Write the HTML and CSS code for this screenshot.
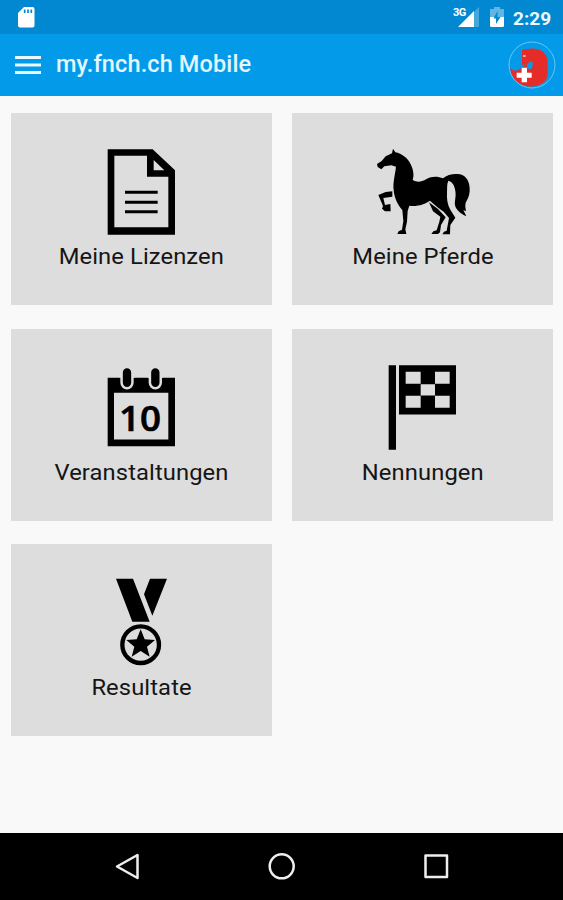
FILE: index.html
```html
<!DOCTYPE html>
<html lang="de">
<head>
<meta charset="utf-8">
<title>my.fnch.ch Mobile</title>
<link rel="stylesheet" href="styles.css">
</head>
<body>
<div class="status">
  <svg class="sd" width="17" height="21" viewBox="0 0 17 21"><path fill="#fff" d="M6 0H14.5Q16.500 0 16.500 2V18.500Q16.500 20.500 14.500 20.500H2Q0 20.500 0 18.500V6Z"/><path stroke="#0288d1" stroke-width="1.700" d="M6.700 2.500V6M10 2.500V6M13.300 2.500V6"/></svg>
  <svg class="signals" width="52" height="24" viewBox="0 0 52 24"><path fill="#45a8dc" d="M19 7L25 1V21H19Z"/><path fill="#fff" d="M4 21L20 5V21Z"/><path fill="#62b5e2" d="M36 3H40V1H46V3H50V11H36Z"/><path fill="#fff" d="M36 11H50V19.500Q50 21 48.500 21H37.500Q36 21 36 19.500Z"/><path fill="#0288d1" d="M43.500 5L39.500 12.500H42V18L46.500 11H43.500Z"/></svg>
  <span class="net">3G</span>
  <span class="clock">2:29</span>
</div>
<header class="bar">
  <svg width="26" height="20" viewBox="0 0 26 20"><path stroke="#e8f8ff" stroke-width="2.800" d="M0 2.500H26M0 10H26M0 17.500H26"/></svg>
  <h1>my.fnch.ch Mobile</h1>
  <svg class="avatar" width="48" height="48" viewBox="0 0 144 144"><path fill="#e52c29" d="M42 44V28Q48 23 66 23C93 20 117 34 119 60V98Q118 114 107 124Q90 137 64 137C30 133 8 110 6 82Q17 92 30 88L45 77C53 70 51 64 60 60Q68 56 73 64C79 80 76 92 66 104L88 106Q74 96 76 72Q73 61 67 63L51 70L42 72Z"/><path fill="#e52c29" d="M68 73H92V125H68Z"/><path fill="#069bea" d="M59 82Q53 75 60 67Q68 57 73 63Q77 75 68 86Z"/><circle cx="72" cy="72" r="69" fill="none" stroke="#69c7f3" stroke-width="3"/><path fill="#fff" d="M41 80H57V95H71V110H57V124H41V110H26V95H41Z"/><path fill="#f3a3a8" d="M45 42H53V48H45Z"/></svg>
</header>
<main class="grid">
  <section class="tile">
    <svg viewBox="0 0 783 384"><g transform="translate(87 81)"><path fill-rule="evenodd" d="M203 28H338L405 91V284H203ZM223 47V262H385V110H321V47ZM341 60V91H373Z"/><path stroke="#000" stroke-width="9" d="M255 157H353M255 187H353M255 215H353"/></g></svg>
    <span>Meine Lizenzen</span>
  </section>
  <section class="tile">
    <svg viewBox="0 0 783 384"><g transform="translate(204 81)"><path d="M96 40L99 26L106 37C125 40 144 55 152 73C160 88 163 108 158 119C169 127 181 126 193 121C206 112 221 109 235 111L249 115C262 104 281 100 300 103C320 107 331 128 329 154C328 169 322 179 317 188C314 199 318 209 318 214L310 210L319 229C301 220 287 209 285 195C283 184 289 171 286 153C284 136 277 125 265 122C260 132 262 144 261 158C260 175 262 194 271 209L286 233L271 255L270 283H247L252 275L260 272L267 234L251 215C239 206 225 196 210 182C195 193 172 200 148 197L143 213L141 245L136 268L139 282H112L116 274L126 269L130 243L127 210C113 194 103 174 101 150C98 129 105 106 108 80L94 76L73 79L64 88L53 81L51 72L65 63L77 49Z"/><path d="M97 154V170L70 174L75 195L91 192L92 214H75L66 206L69 198L55 165L77 156ZM207 187L234 207L257 232L243 255L240 277L234 282H214L220 274L230 271L238 245L241 230L219 214Z"/></g></svg>
    <span>Meine Pferde</span>
  </section>
  <section class="tile">
    <svg viewBox="0 0 783 384"><g transform="translate(87 79.500)"><path fill-rule="evenodd" d="M203 67H405V272H203ZM222 112V252H385V112Z"/><path stroke="#ddd" stroke-width="40" stroke-linecap="round" d="M261 60V82M346 60V82"/><path fill="#ddd" d="M238 38H284V67H238ZM323 38H369V67H323Z"/><path stroke="#000" stroke-width="25" stroke-linecap="round" d="M261 51V82M346 51V82"/><text class="date" x="237" y="226" textLength="126" lengthAdjust="spacingAndGlyphs">10</text></g></svg>
    <span>Veranstaltungen</span>
  </section>
  <section class="tile">
    <svg viewBox="0 0 783 384"><g transform="translate(174 79.500)"><path d="M116 29H138V283H116ZM147 29H318V177H147Z"/><path fill="#ddd" d="M167 49H212V85H167ZM255 49H299V85H255ZM212 86H255V120H212ZM167 121H212V157H167ZM255 121H299V157H255Z"/></g></svg>
    <span>Nennungen</span>
  </section>
  <section class="tile">
    <svg viewBox="0 0 783 384"><g transform="translate(207 78)"><path d="M108 26H159L209 155H157ZM210 26H261L217 137L192 73Z"/><circle cx="182" cy="224" r="55" fill="none" stroke="#000" stroke-width="13"/><path d="M182 178L194 208L225 210L201 230L209 260L182 243L155 260L163 230L139 210L170 208Z"/></g></svg>
    <span>Resultate</span>
  </section>
</main>
<nav class="nav">
  <svg width="563" height="66" viewBox="0 0 563 66"><g fill="none" stroke="#eee" stroke-width="2.500" stroke-linejoin="round"><path d="M137.500 22V45L117 33.500Z"/><circle cx="281.700" cy="33.300" r="12"/><rect x="425.500" y="22.500" width="21.500" height="21.500"/></g></svg>
</nav>
</body>
</html>
```
FILE: styles.css
```css
* { box-sizing: border-box; }
body { margin: 0; height: 900px; display: flex; flex-direction: column; background: #f9f9f9; font-family: Roboto, sans-serif; overflow: hidden; }
.status { position: relative; height: 34px; flex: none; display: flex; background: #0288d1; color: #fff; }
.sd { margin: 7px 0 0 18px; }
.signals { margin: 6px 0 0 419px; }
.net { position: absolute; left: 453px; top: 6px; font-size: 11px; line-height: 13px; font-weight: 700; letter-spacing: -.5px; }
.clock { margin-left: 7px; font-size: 19px; line-height: 37px; font-weight: 700; color: #eefaff; }
.bar { height: 61.500px; flex: none; display: flex; align-items: center; padding: 0 7px 0 15px; background: #039be9; }
h1 { margin: 0 auto 2px 15px; font-size: 23.500px; line-height: 30px; font-weight: 500; letter-spacing: .13px; color: #e4f6ff; white-space: nowrap; }
.grid { flex: 1; display: grid; grid-template-columns: 261px 261px; grid-auto-rows: 192px; gap: 23.500px 20px; padding: 17.500px 0 0 11px; }
.tile { display: flex; flex-direction: column; align-items: center; background: #ddd; }
.tile svg { width: 261px; height: 128px; flex: none; }
.tile span { font-size: 22.500px; line-height: 31px; letter-spacing: .1px; color: #151515; white-space: nowrap; transform: scaleX(1.055); }
.date { font: 600 104px "Open Sans", sans-serif; stroke: #000; stroke-width: 2px; }
.nav { height: 67px; flex: none; background: #000; }
.nav svg { display: block; }
```
